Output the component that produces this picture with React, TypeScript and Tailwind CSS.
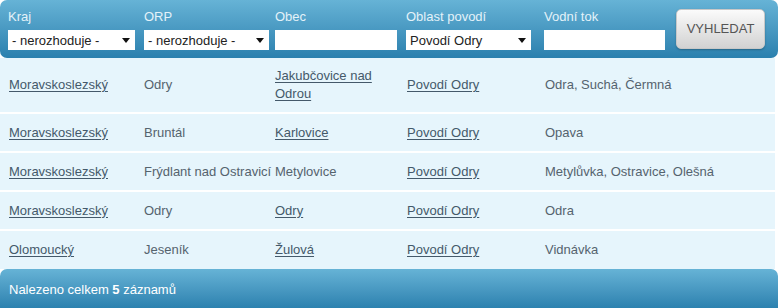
import React from 'react';

type Row = {
  kraj: string;
  orp: string;
  obec: string;
  obecLink: boolean;
  oblast: string;
  tok: string;
};

const rows: Row[] = [
  { kraj: 'Moravskoslezský', orp: 'Odry', obec: 'Jakubčovice nad Odrou', obecLink: true, oblast: 'Povodí Odry', tok: 'Odra, Suchá, Čermná' },
  { kraj: 'Moravskoslezský', orp: 'Bruntál', obec: 'Karlovice', obecLink: true, oblast: 'Povodí Odry', tok: 'Opava' },
  { kraj: 'Moravskoslezský', orp: 'Frýdlant nad Ostravicí', obec: 'Metylovice', obecLink: false, oblast: 'Povodí Odry', tok: 'Metylůvka, Ostravice, Olešná' },
  { kraj: 'Moravskoslezský', orp: 'Odry', obec: 'Odry', obecLink: true, oblast: 'Povodí Odry', tok: 'Odra' },
  { kraj: 'Olomoucký', orp: 'Jeseník', obec: 'Žulová', obecLink: true, oblast: 'Povodí Odry', tok: 'Vidnávka' },
];

function FakeSelect({ value, width }: { value: string; width: string }) {
  return (
    <div className={`${width} h-[20px] bg-white flex items-center justify-between pl-[4px] pr-[5px] text-[13px] text-[#222]`}>
      <span className="leading-none">{value}</span>
      <svg width="8" height="5" viewBox="0 0 8 5">
        <path d="M0 0 L8 0 L4 5 Z" fill="#111" />
      </svg>
    </div>
  );
}

function Field({ label, children }: { label: string; children: React.ReactNode }) {
  return (
    <div className="flex flex-col">
      <div className="text-[13px] leading-[16px] text-[#e4f2f9] mb-[5px]">{label}</div>
      {children}
    </div>
  );
}

const linkCls = 'underline text-[#44596a] underline-offset-[2px] decoration-[#44596a]';

export default function App() {
  return (
    <div className="w-[778px] bg-white text-[13px]" style={{ fontFamily: '"Liberation Sans", Arial, sans-serif' }}>
      <div className="h-[58px] rounded-[7px] bg-gradient-to-b from-[#66b3d6] to-[#2a80ae] flex items-start pl-[8px] pt-[9px]">
        <div className="flex gap-[9px]">
          <Field label="Kraj">
            <FakeSelect value="- nerozhoduje -" width="w-[127px]" />
          </Field>
          <Field label="ORP">
            <FakeSelect value="- nerozhoduje -" width="w-[125px]" />
          </Field>
        </div>
        <div className="ml-[6px]">
          <Field label="Obec">
            <div className="w-[122px] h-[20px] bg-white" />
          </Field>
        </div>
        <div className="ml-[9px]">
          <Field label="Oblast povodí">
            <FakeSelect value="Povodí Odry" width="w-[125px]" />
          </Field>
        </div>
        <div className="ml-[13px]">
          <Field label="Vodní tok">
            <div className="w-[121px] h-[20px] bg-white" />
          </Field>
        </div>
        <button className="ml-[11px] w-[89px] h-[40px] rounded-[5px] bg-gradient-to-b from-[#fbfbfb] to-[#d2d2d2] border border-[#c8c8c8] text-[13px] text-[#555] shadow-[0_1px_2px_rgba(0,0,0,0.25)]">
          VYHLEDAT
        </button>
      </div>

      <div className="bg-[#e6f5fc] w-[775px]">
        {rows.map((r, i) => (
          <div
            key={i}
            className={`grid grid-cols-[135px_131px_132px_138px_1fr] items-center pl-[9px] text-[13px] leading-[18px] text-[#55636e] ${i === 0 ? 'h-[54px]' : i === rows.length - 1 ? 'h-[38px]' : 'h-[37px]'} ${i < rows.length - 1 ? 'border-b-2 border-white box-content' : ''}`}
          >
            <div><span className={linkCls}>{r.kraj}</span></div>
            <div className="whitespace-nowrap">{r.orp}</div>
            <div className="pr-[6px]">
              {r.obecLink ? <span className={linkCls}>{r.obec}</span> : r.obec}
            </div>
            <div><span className={linkCls}>{r.oblast}</span></div>
            <div>{r.tok}</div>
          </div>
        ))}
      </div>

      <div className="h-[40px] rounded-t-[7px] bg-gradient-to-b from-[#66b3d6] to-[#2a80ae] flex items-center pl-[9px] pt-[1px] text-[13px] text-white">
        <span>
          Nalezeno celkem <b>5</b> záznamů
        </span>
      </div>
    </div>
  );
}
